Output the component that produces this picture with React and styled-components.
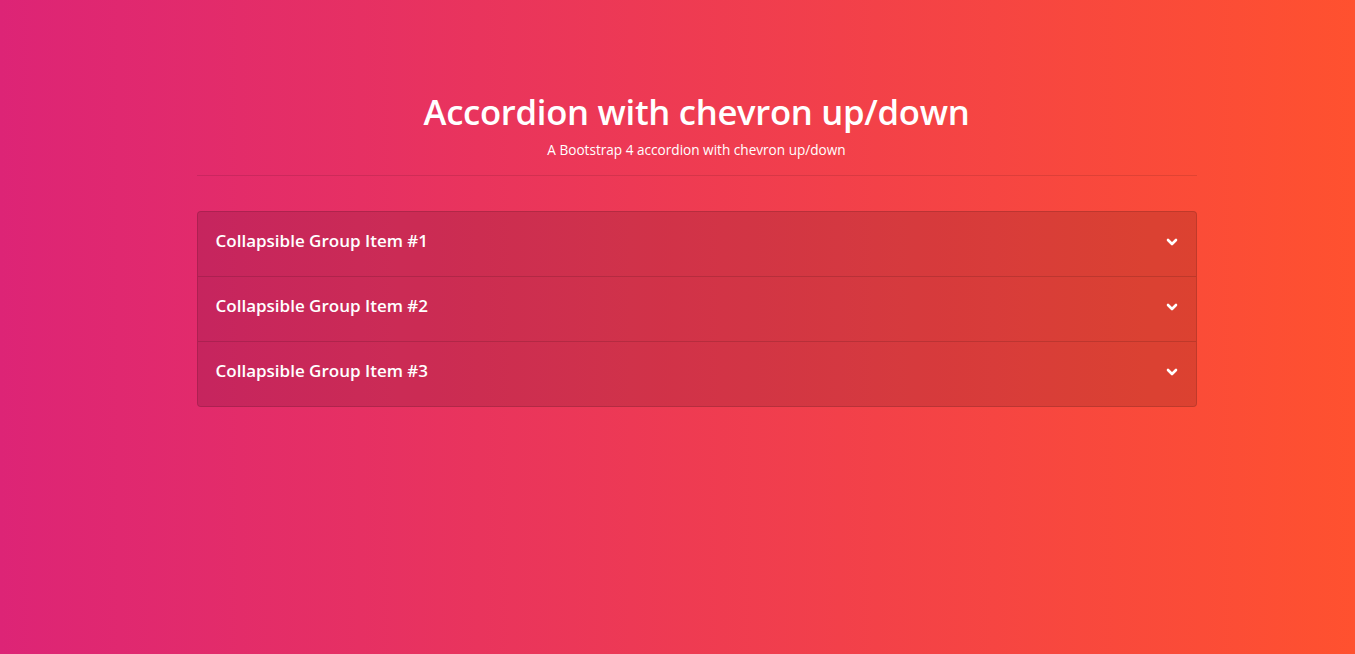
import React, { useState } from 'react';
import styled, { createGlobalStyle } from 'styled-components';

const GlobalStyle = createGlobalStyle`
  html, body {
    margin: 0;
    padding: 0;
    height: 100%;
  }
  body {
    background: linear-gradient(to right, #dd2476, #ff512f);
    font-family: "Open Sans", "Noto Sans", sans-serif;
    color: #fff;
  }
`;

const Page = styled.div`
  width: 1000px;
  margin-left: calc(50% - 481px);
  padding-top: 88px;
`;

const Header = styled.header`
  text-align: center;
  padding-bottom: 16px;
  border-bottom: 1px solid rgba(0, 0, 0, 0.1);
  margin-bottom: 35px;
`;

const Title = styled.h1`
  margin: 0;
  font-size: 34.7px;
  font-weight: 600;
  line-height: 48px;
  letter-spacing: -0.3px;
`;

const Subtitle = styled.p`
  margin: 4px 0 0;
  font-size: 13.6px;
  line-height: 19px;
`;

const Accordion = styled.div`
  border: 1px solid rgba(0, 0, 0, 0.13);
  border-radius: 4px;
  overflow: hidden;
  background: rgba(0, 0, 0, 0.12);
`;

const Item = styled.div`
  & + & {
    border-top: 1px solid rgba(0, 0, 0, 0.13);
  }
`;

const ItemHead = styled.button`
  display: flex;
  align-items: center;
  justify-content: space-between;
  width: 100%;
  height: 64px;
  padding: 0 18px 7px 18px;
  background: transparent;
  border: none;
  color: #fff;
  font-family: inherit;
  font-size: 17px;
  font-weight: 600;
  cursor: pointer;
  text-align: left;
`;

const Chevron = styled.svg`
  width: 12px;
  height: 12px;
  margin-top: 2px;
  transform: ${({ open }) => (open ? 'rotate(180deg)' : 'none')};
`;

const Body = styled.div`
  padding: 0 18px 18px;
  font-size: 14px;
  line-height: 1.5;
`;

const items = ['Collapsible Group Item #1', 'Collapsible Group Item #2', 'Collapsible Group Item #3'];

const App = () => {
  const [open, setOpen] = useState(null);

  return (
    <Page>
      <GlobalStyle />
      <Header>
        <Title>Accordion with chevron up/down</Title>
        <Subtitle>A Bootstrap 4 accordion with chevron up/down</Subtitle>
      </Header>
      <Accordion>
        {items.map((label, i) => (
          <Item key={label}>
            <ItemHead onClick={() => setOpen(open === i ? null : i)}>
              {label}
              <Chevron open={open === i} viewBox="0 0 12 12">
                <path d="M2 4 L6 8 L10 4" fill="none" stroke="#fff" strokeWidth="2.6" strokeLinecap="round" strokeLinejoin="round" />
              </Chevron>
            </ItemHead>
            {open === i && (
              <Body>
                Anim pariatur cliche reprehenderit, enim eiusmod high life accusamus terry richardson ad squid.
              </Body>
            )}
          </Item>
        ))}
      </Accordion>
    </Page>
  );
};

export default App;
